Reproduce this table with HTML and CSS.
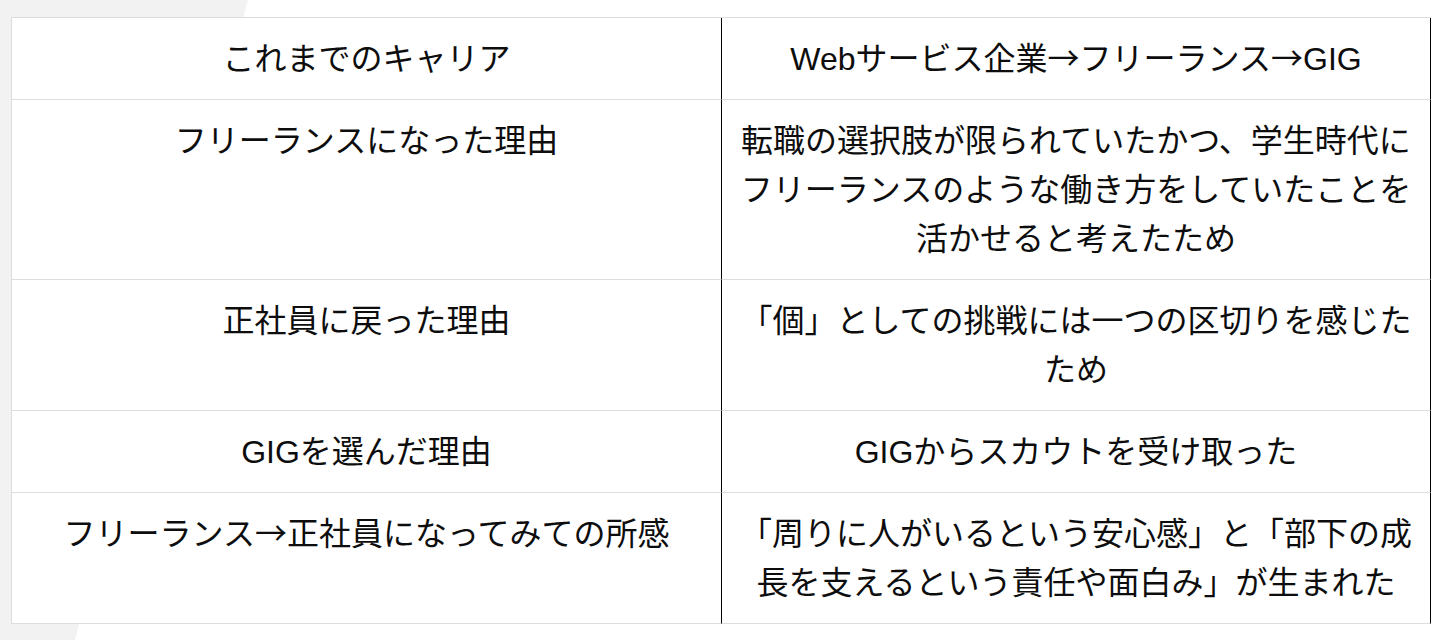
FILE: index.html
```html
<!DOCTYPE html>
<html lang="ja">
<head>
<meta charset="utf-8">
<title>キャリア</title>
<link rel="stylesheet" href="styles.css">
</head>
<body>
<div class="page">
  <div class="table">
    <div class="cell key">これまでのキャリア</div>
    <div class="cell value">Webサービス企業<span class="arrow">→</span>フリーランス<span class="arrow">→</span>GIG</div>

    <div class="cell key">フリーランスになった理由</div>
    <div class="cell value">転職の選択肢が限られていたかつ、学生時代にフリーランスのような働き方をしていたことを活かせると考えたため</div>

    <div class="cell key">正社員に戻った理由</div>
    <div class="cell value">「個」としての挑戦には一つの区切りを感じたため</div>

    <div class="cell key">GIGを選んだ理由</div>
    <div class="cell value">GIGからスカウトを受け取った</div>

    <div class="cell key">フリーランス<span class="arrow">→</span>正社員になってみての所感</div>
    <div class="cell value">「周りに人がいるという安心感」と「部下の成長を支えるという責任や面白み」が生まれた</div>
  </div>
</div>
</body>
</html>
```

FILE: styles.css
```css
html, body {
  margin: 0;
  padding: 0;
}

body {
  background: #f2f2f2;
  font-family: "Liberation Sans", "Noto Sans CJK JP", sans-serif;
  color: #0d0d0d;
}

.page {
  position: relative;
  min-height: 640px;
  padding: 17px 10px 0 11px;
  box-sizing: border-box;
}

.page::before {
  content: "";
  position: absolute;
  inset: 0;
  background: #ffffff;
  clip-path: polygon(248px 0, 100% 0, 100% 100%, 75px 100%);
}

.table {
  position: relative;
  display: grid;
  grid-template-columns: 710px 710px;
  border-top: 1px solid #dddddd;
  width: 1420px;
}

.cell {
  background: #ffffff;
  font-size: 32px;
  line-height: 49px;
  text-align: center;
  padding: 17px 16px 15px;
  border-bottom: 1px solid #dddddd;
  box-sizing: border-box;
}

.key {
  border-left: 1px solid #dddddd;
}

.value {
  border-left: 1px solid #000000;
  border-right: 1px solid #000000;
}

.arrow {
  font-family: "Noto Sans CJK JP", sans-serif;
  line-height: 1;
}
```
